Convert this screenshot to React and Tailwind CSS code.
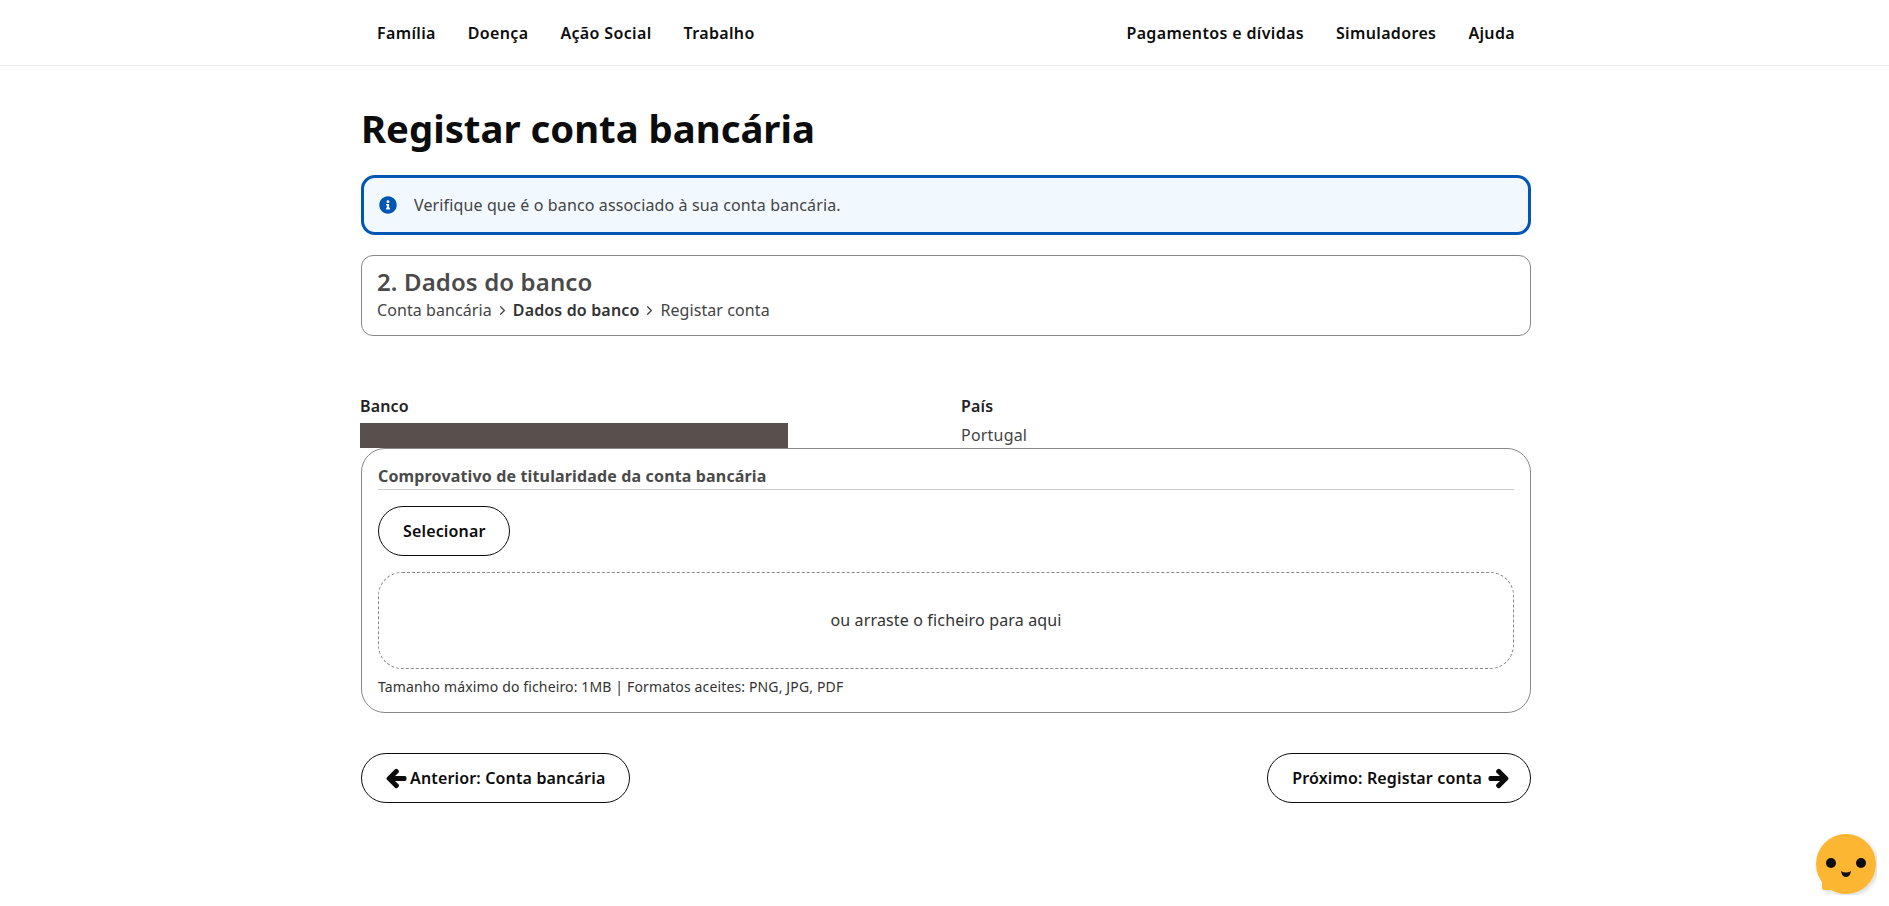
import { FaArrowLeft, FaArrowRight, FaInfoCircle } from 'react-icons/fa';
import { LuChevronRight } from 'react-icons/lu';

const NAV_LEFT = ['Família', 'Doença', 'Ação Social', 'Trabalho'];
const NAV_RIGHT = ['Pagamentos e dívidas', 'Simuladores', 'Ajuda'];

function NavLinks({ items }) {
  return (
    <ul className="flex gap-[32px]">
      {items.map(item => (
        <li key={item} className="text-base font-semibold tracking-[0.35px] text-[#0c0c0c]">{item}</li>
      ))}
    </ul>
  );
}

function Crumb() {
  return <LuChevronRight className="mx-[3px] w-[15px] h-[15px] text-[#444444]" />;
}

function PillButton({ children, className = '' }) {
  return (
    <button className={`flex items-center h-[50px] border border-[#0c0c0c] rounded-[25px] bg-white text-base font-semibold tracking-[0.15px] text-[#0c0c0c] ${className}`}>
      {children}
    </button>
  );
}

function Mascot() {
  return (
    <svg viewBox="0 0 62 62" className="fixed left-[1815px] top-[833px] w-[62px] h-[62px]">
      <defs>
        <filter id="mascot-shadow" x="-20%" y="-20%" width="150%" height="150%">
          <feDropShadow dx="2" dy="2" stdDeviation="2" floodColor="#000000" floodOpacity="0.15" />
        </filter>
      </defs>
      <g filter="url(#mascot-shadow)">
        <circle cx="31" cy="31" r="30" fill="#fdb633" />
        <path d="M7 44 L7 55 Q7 57 9 57 L24 57 Z" fill="#fdb633" />
      </g>
      <circle cx="16" cy="30" r="5" fill="#0c0c0c" />
      <circle cx="46" cy="30" r="5" fill="#0c0c0c" />
      <path d="M26 38 Q31 41 36 38 Q35 44 31 44 Q27 44 26 38 Z" fill="#0c0c0c" />
    </svg>
  );
}

export default function App() {
  return (
    <div className="min-h-[906px] bg-white font-['Noto_Sans',sans-serif] text-[#444444]">
      <nav className="h-[66px] border-b border-[#eeeeee]">
        <div className="w-[1170px] ml-[361px] h-full px-[16px] flex items-center justify-between">
          <NavLinks items={NAV_LEFT} />
          <NavLinks items={NAV_RIGHT} />
        </div>
      </nav>

      <main className="w-[1170px] ml-[361px]">
        <h1 className="pt-[37px] text-[38.3px] leading-[50px] font-bold text-[#0c0c0c]">Registar conta bancária</h1>

        <div className="mt-[22px] h-[60px] px-[15px] flex items-center border-[3px] border-[#0056b3] rounded-[14px] bg-[#f1f8fe]">
          <FaInfoCircle className="w-[18px] h-[18px] text-[#0056b3]" />
          <p className="ml-[17px] text-base tracking-[0.13px]">Verifique que é o banco associado à sua conta bancária.</p>
        </div>

        <div className="mt-[20px] h-[81px] px-[15px] pt-[10px] border border-[#888888] rounded-[12px]">
          <h2 className="text-[24px] leading-[32px] font-semibold tracking-[0.12px] text-[#4a4a4a]">2. Dados do banco</h2>
          <div className="flex items-center text-base leading-[24px] tracking-[0.08px]">
            <span>Conta bancária</span>
            <Crumb />
            <span className="font-semibold tracking-[0.15px] text-[#333333]">Dados do banco</span>
            <Crumb />
            <span>Registar conta</span>
          </div>
        </div>

        <div className="-ml-[1px] mt-[58px] flex">
          <div className="w-[601px]">
            <p className="text-base leading-[24px] font-semibold tracking-[0.15px] text-[#222222]">Banco</p>
            <div className="mt-[5px] w-[428px] h-[25px] bg-[#59504e]" />
          </div>
          <div>
            <p className="text-base leading-[24px] font-semibold tracking-[0.15px] text-[#222222]">País</p>
            <p className="mt-[5px] text-base leading-[24px] tracking-[0.2px]">Portugal</p>
          </div>
        </div>

        <section className="h-[265px] px-[16px] pt-[15px] border border-[#888888] rounded-[24px]">
          <h3 className="pb-[1px] border-b border-[#cccccc] text-base leading-[24px] font-bold tracking-[0.15px] text-[#4a4a4a]">Comprovativo de titularidade da conta bancária</h3>
          <PillButton className="mt-[16px] pl-[24px] pr-[23px]">Selecionar</PillButton>
          <div className="mt-[16px] h-[97px] pb-[1px] flex items-center justify-center border border-dashed border-[#888888] rounded-[24px] text-base tracking-[0.15px] text-[#333333]">
            ou arraste o ficheiro para aqui
          </div>
          <p className="mt-[6px] text-sm leading-[24px] tracking-[0.14px] text-[#333333]">Tamanho máximo do ficheiro: 1MB | Formatos aceites: PNG, JPG, PDF</p>
        </section>

        <div className="mt-[40px] flex justify-between">
          <PillButton className="px-[24px]">
            <FaArrowLeft className="w-[21px] h-[21px] mr-[3px] stroke-current stroke-[40px]" />
            Anterior: Conta bancária
          </PillButton>
          <PillButton className="pl-[24px] pr-[21px]">
            Próximo: Registar conta
            <FaArrowRight className="w-[21px] h-[21px] ml-[6px] stroke-current stroke-[40px]" />
          </PillButton>
        </div>
      </main>

      <Mascot />
    </div>
  );
}
